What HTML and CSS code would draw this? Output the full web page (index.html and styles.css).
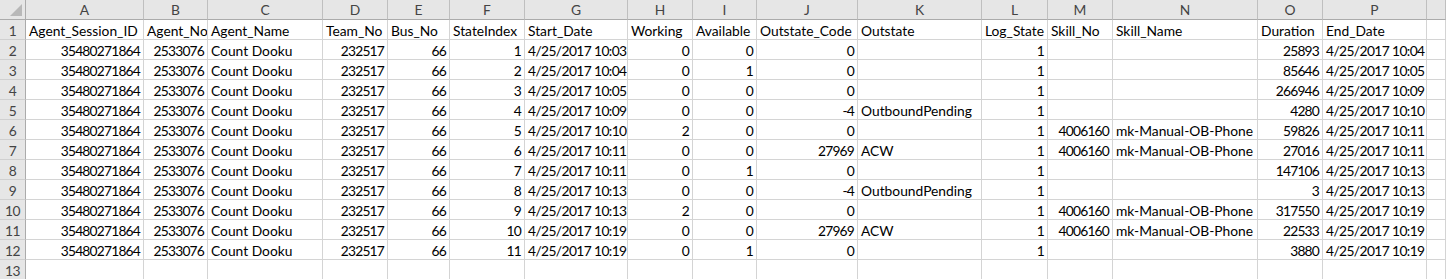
FILE: index.html
```html
<!DOCTYPE html>
<html>
<head>
<meta charset="utf-8">
<link rel="stylesheet" href="styles.css">
</head>
<body>
<div class="sheet">
  <div class="ch corner"><span class="tri"></span></div>
  <div class="ch">A</div><div class="ch">B</div><div class="ch">C</div><div class="ch">D</div><div class="ch">E</div><div class="ch">F</div><div class="ch">G</div><div class="ch">H</div><div class="ch">I</div><div class="ch">J</div><div class="ch">K</div><div class="ch">L</div><div class="ch">M</div><div class="ch">N</div><div class="ch">O</div><div class="ch">P</div><div class="ch"></div>

  <div class="rh">1</div>
  <div class="c">Agent_Session_ID</div><div class="c">Agent_No</div><div class="c">Agent_Name</div><div class="c">Team_No</div><div class="c">Bus_No</div><div class="c">StateIndex</div><div class="c">Start_Date</div><div class="c">Working</div><div class="c">Available</div><div class="c">Outstate_Code</div><div class="c">Outstate</div><div class="c">Log_State</div><div class="c">Skill_No</div><div class="c">Skill_Name</div><div class="c">Duration</div><div class="c">End_Date</div><div class="c"></div>

  <div class="rh">2</div>
  <div class="c n">35480271864</div><div class="c n">2533076</div><div class="c">Count Dooku</div><div class="c n">232517</div><div class="c n">66</div><div class="c n">1</div><div class="c d">4/25/2017 10:03</div><div class="c n">0</div><div class="c n">0</div><div class="c n">0</div><div class="c"></div><div class="c n">1</div><div class="c"></div><div class="c"></div><div class="c n">25893</div><div class="c d">4/25/2017 10:04</div><div class="c"></div>

  <div class="rh">3</div>
  <div class="c n">35480271864</div><div class="c n">2533076</div><div class="c">Count Dooku</div><div class="c n">232517</div><div class="c n">66</div><div class="c n">2</div><div class="c d">4/25/2017 10:04</div><div class="c n">0</div><div class="c n">1</div><div class="c n">0</div><div class="c"></div><div class="c n">1</div><div class="c"></div><div class="c"></div><div class="c n">85646</div><div class="c d">4/25/2017 10:05</div><div class="c"></div>

  <div class="rh">4</div>
  <div class="c n">35480271864</div><div class="c n">2533076</div><div class="c">Count Dooku</div><div class="c n">232517</div><div class="c n">66</div><div class="c n">3</div><div class="c d">4/25/2017 10:05</div><div class="c n">0</div><div class="c n">0</div><div class="c n">0</div><div class="c"></div><div class="c n">1</div><div class="c"></div><div class="c"></div><div class="c n">266946</div><div class="c d">4/25/2017 10:09</div><div class="c"></div>

  <div class="rh">5</div>
  <div class="c n">35480271864</div><div class="c n">2533076</div><div class="c">Count Dooku</div><div class="c n">232517</div><div class="c n">66</div><div class="c n">4</div><div class="c d">4/25/2017 10:09</div><div class="c n">0</div><div class="c n">0</div><div class="c n">-4</div><div class="c">OutboundPending</div><div class="c n">1</div><div class="c"></div><div class="c"></div><div class="c n">4280</div><div class="c d">4/25/2017 10:10</div><div class="c"></div>

  <div class="rh">6</div>
  <div class="c n">35480271864</div><div class="c n">2533076</div><div class="c">Count Dooku</div><div class="c n">232517</div><div class="c n">66</div><div class="c n">5</div><div class="c d">4/25/2017 10:10</div><div class="c n">2</div><div class="c n">0</div><div class="c n">0</div><div class="c"></div><div class="c n">1</div><div class="c n">4006160</div><div class="c">mk-Manual-OB-Phone</div><div class="c n">59826</div><div class="c d">4/25/2017 10:11</div><div class="c"></div>

  <div class="rh">7</div>
  <div class="c n">35480271864</div><div class="c n">2533076</div><div class="c">Count Dooku</div><div class="c n">232517</div><div class="c n">66</div><div class="c n">6</div><div class="c d">4/25/2017 10:11</div><div class="c n">0</div><div class="c n">0</div><div class="c n">27969</div><div class="c">ACW</div><div class="c n">1</div><div class="c n">4006160</div><div class="c">mk-Manual-OB-Phone</div><div class="c n">27016</div><div class="c d">4/25/2017 10:11</div><div class="c"></div>

  <div class="rh">8</div>
  <div class="c n">35480271864</div><div class="c n">2533076</div><div class="c">Count Dooku</div><div class="c n">232517</div><div class="c n">66</div><div class="c n">7</div><div class="c d">4/25/2017 10:11</div><div class="c n">0</div><div class="c n">1</div><div class="c n">0</div><div class="c"></div><div class="c n">1</div><div class="c"></div><div class="c"></div><div class="c n">147106</div><div class="c d">4/25/2017 10:13</div><div class="c"></div>

  <div class="rh">9</div>
  <div class="c n">35480271864</div><div class="c n">2533076</div><div class="c">Count Dooku</div><div class="c n">232517</div><div class="c n">66</div><div class="c n">8</div><div class="c d">4/25/2017 10:13</div><div class="c n">0</div><div class="c n">0</div><div class="c n">-4</div><div class="c">OutboundPending</div><div class="c n">1</div><div class="c"></div><div class="c"></div><div class="c n">3</div><div class="c d">4/25/2017 10:13</div><div class="c"></div>

  <div class="rh">10</div>
  <div class="c n">35480271864</div><div class="c n">2533076</div><div class="c">Count Dooku</div><div class="c n">232517</div><div class="c n">66</div><div class="c n">9</div><div class="c d">4/25/2017 10:13</div><div class="c n">2</div><div class="c n">0</div><div class="c n">0</div><div class="c"></div><div class="c n">1</div><div class="c n">4006160</div><div class="c">mk-Manual-OB-Phone</div><div class="c n">317550</div><div class="c d">4/25/2017 10:19</div><div class="c"></div>

  <div class="rh">11</div>
  <div class="c n">35480271864</div><div class="c n">2533076</div><div class="c">Count Dooku</div><div class="c n">232517</div><div class="c n">66</div><div class="c n">10</div><div class="c d">4/25/2017 10:19</div><div class="c n">0</div><div class="c n">0</div><div class="c n">27969</div><div class="c">ACW</div><div class="c n">1</div><div class="c n">4006160</div><div class="c">mk-Manual-OB-Phone</div><div class="c n">22533</div><div class="c d">4/25/2017 10:19</div><div class="c"></div>

  <div class="rh">12</div>
  <div class="c n">35480271864</div><div class="c n">2533076</div><div class="c">Count Dooku</div><div class="c n">232517</div><div class="c n">66</div><div class="c n">11</div><div class="c d">4/25/2017 10:19</div><div class="c n">0</div><div class="c n">1</div><div class="c n">0</div><div class="c"></div><div class="c n">1</div><div class="c"></div><div class="c"></div><div class="c n">3880</div><div class="c d">4/25/2017 10:19</div><div class="c"></div>

  <div class="rh">13</div>
  <div class="c"></div><div class="c"></div><div class="c"></div><div class="c"></div><div class="c"></div><div class="c"></div><div class="c"></div><div class="c"></div><div class="c"></div><div class="c"></div><div class="c"></div><div class="c"></div><div class="c"></div><div class="c"></div><div class="c"></div><div class="c"></div><div class="c"></div>
</div>
</body>
</html>
```

FILE: styles.css
```css
html, body {
  margin: 0;
  padding: 0;
  background: #ffffff;
}

.sheet {
  display: grid;
  grid-template-columns: 26px 118px 64px 115px 65px 62px 75px 103px 65px 64px 101px 124px 66px 65px 145px 65px 104px 1fr;
  grid-auto-rows: 20px;
  font-family: Lato, "Open Sans", sans-serif;
  font-size: 13.8px;
  color: #000000;
}

.ch {
  box-sizing: border-box;
  background: #e6e6e6;
  color: #444444;
  text-align: center;
  line-height: 19px;
  border-right: 1px solid #bfbfbf;
  border-bottom: 1px solid #ababab;
  white-space: nowrap;
  overflow: hidden;
}

.corner {
  position: relative;
  border-right: 1px solid #ababab;
}

.tri {
  position: absolute;
  right: 3px;
  bottom: 3px;
  width: 0;
  height: 0;
  border-left: 12px solid transparent;
  border-bottom: 12px solid #b8b8b8;
}

.rh {
  box-sizing: border-box;
  background: #e6e6e6;
  color: #444444;
  text-align: center;
  line-height: 20px;
  padding-top: 1px;
  border-right: 1px solid #ababab;
  border-bottom: 1px solid #d0d0d0;
  letter-spacing: -0.6px;
}

.c {
  box-sizing: border-box;
  border-right: 1px solid #d4d4d4;
  border-bottom: 1px solid #d4d4d4;
  padding: 1px 2px 0 3px;
  line-height: 20px;
  white-space: nowrap;
  overflow: hidden;
}

.n {
  text-align: right;
  letter-spacing: -0.8px;
  padding-right: 3px;
}

.d {
  text-align: right;
  letter-spacing: -0.6px;
  padding-right: 3px;
}
```
